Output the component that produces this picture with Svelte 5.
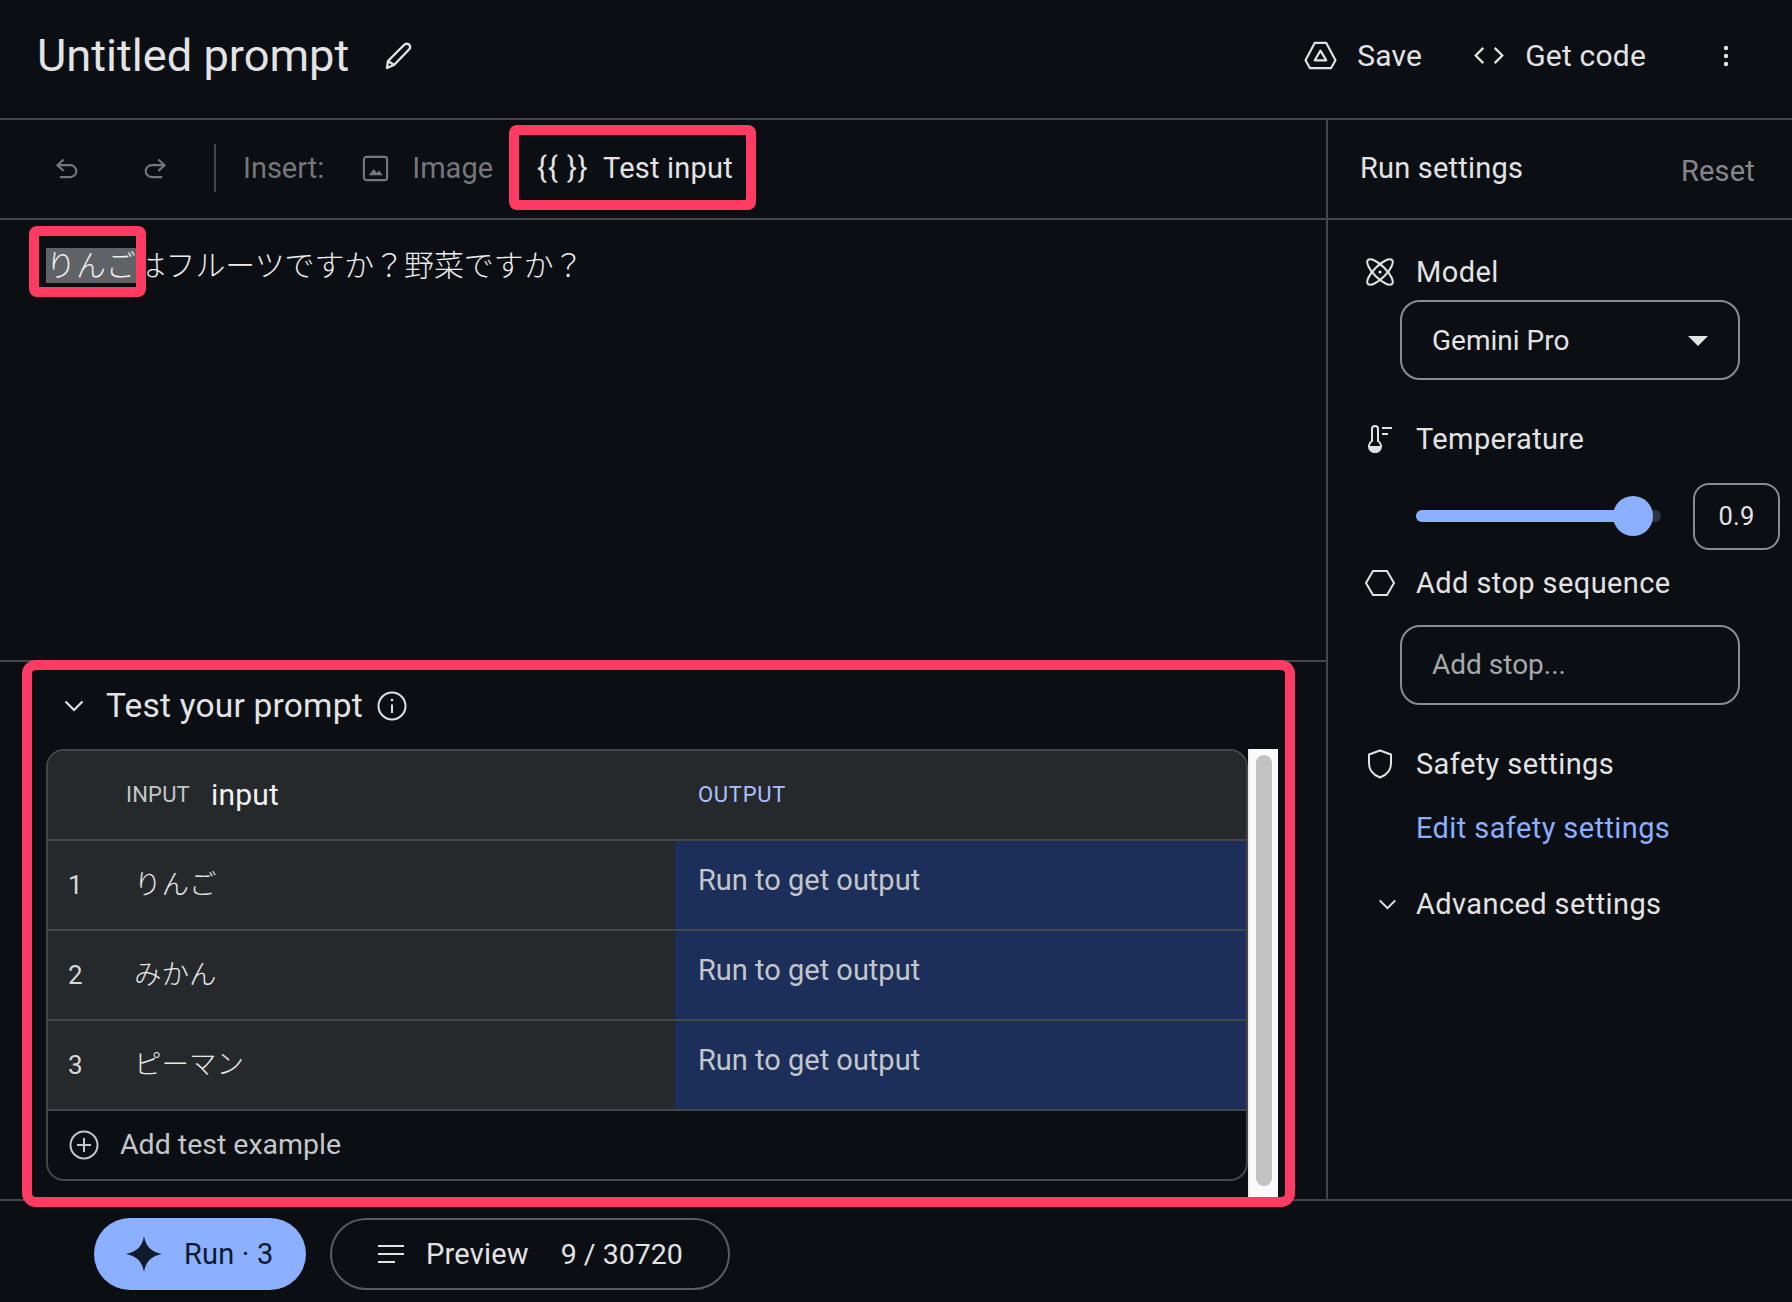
<script>
const rows = [
  { n: 1, text: 'りんご' },
  { n: 2, text: 'みかん' },
  { n: 3, text: 'ピーマン' }
]
</script>

<div class="app">
  <header class="top">
    <h1>Untitled prompt</h1>
    <svg class="pencil" viewBox="0 0 28 28" fill="none" stroke="currentColor" stroke-width="2.4" stroke-linejoin="round"><path d="M2 26l1-7L19 3c1.500-1.500 3.500-1.500 5-.5s1.500 3.500 0 5L9 23z"/><path d="M3 19l6 4"/></svg>
    <div class="top-actions">
      <span class="action save">
        <svg viewBox="0 0 34 30" fill="none" stroke="currentColor" stroke-width="2.2" stroke-linejoin="round"><path d="M11 2h12l9.500 18-4.500 8H6l-4.500-8z"/><path d="M17 10l6 10H11z"/></svg>
        Save
      </span>
      <span class="action code">
        <svg viewBox="0 0 32 20" fill="none" stroke="currentColor" stroke-width="2.4"><path d="M10 2L2 10l8 8"/><path d="M22 2l8 8-8 8"/></svg>
        Get code
      </span>
      <svg class="dots" viewBox="0 0 6 22" fill="currentColor"><circle cx="3" cy="3" r="2.2"/><circle cx="3" cy="11" r="2.2"/><circle cx="3" cy="19" r="2.2"/></svg>
    </div>
  </header>

  <div class="body">
    <main class="left">
      <div class="toolbar">
        <svg class="undo" viewBox="0 0 24 22" fill="none" stroke="currentColor" stroke-width="2.2"><path d="M9 1.500L2.500 7.500 9 13.500"/><path d="M3 7.500h13a6 6 0 0 1 0 12.500H5"/></svg>
        <svg class="redo" viewBox="0 0 24 22" fill="none" stroke="currentColor" stroke-width="2.2"><path d="M15 1.500l6.500 6-6.500 6"/><path d="M21 7.500H8a6 6 0 0 0 0 12.500h11"/></svg>
        <span class="divider"></span>
        <span class="insert">Insert:</span>
        <svg class="image" viewBox="0 0 28 28"><rect x="2" y="2" width="24" height="24" rx="2.500" fill="none" stroke="currentColor" stroke-width="2.2"/><path d="M7 21l5-6.500 3.500 4 2.500-2.500 3.500 5z" fill="currentColor"/></svg>
        <span class="image-label">Image</span>
        <span class="test-input"><span class="braces">{'{{ }}'}</span>Test input</span>
      </div>

      <div class="editor">
        <p><mark>りんご</mark>はフルーツですか？野菜ですか？</p>
      </div>

      <section class="tests">
        <div class="tests-head">
          <svg class="chev" viewBox="0 0 20 12" fill="none" stroke="currentColor" stroke-width="2.2"><path d="M1.500 1.500L10 10l8.500-8.500"/></svg>
          <h2>Test your prompt</h2>
          <svg class="info" viewBox="0 0 30 30" fill="none" stroke="currentColor" stroke-width="2"><circle cx="15" cy="15" r="13.500"/><path d="M15 13.500v8.500"/><circle cx="15" cy="9" r="1.300" fill="currentColor" stroke="none"/></svg>
        </div>
        <div class="table-wrap">
          <div class="table">
            <div class="thead">
              <div class="th-in"><span class="cap">INPUT</span><span class="var">input</span></div>
              <div class="th-out">OUTPUT</div>
            </div>
            {#each rows as row}
              <div class="row">
                <div class="cell-in"><span class="num">{row.n}</span><span class="val">{row.text}</span></div>
                <div class="cell-out">Run to get output</div>
              </div>
            {/each}
            <div class="add">
              <svg viewBox="0 0 30 30" fill="none" stroke="currentColor" stroke-width="2"><circle cx="15" cy="15" r="13.500"/><path d="M15 8v14M8 15h14"/></svg>
              Add test example
            </div>
          </div>
          <div class="scroll"><div class="thumb"></div></div>
        </div>
      </section>
    </main>

    <aside class="right">
      <div class="right-head">
        <span>Run settings</span>
        <span class="reset">Reset</span>
      </div>
      <div class="settings">
        <div class="label model">
          <svg viewBox="0 0 28 28" fill="none" stroke="currentColor" stroke-width="2"><ellipse cx="14" cy="14" rx="17" ry="6" transform="rotate(45 14 14)"/><ellipse cx="14" cy="14" rx="17" ry="6" transform="rotate(-45 14 14)"/><circle cx="14" cy="14" r="1.600" fill="currentColor" stroke="none"/></svg>
          Model
        </div>
        <div class="select">Gemini Pro<span class="caret"></span></div>

        <div class="label temp">
          <svg viewBox="0 0 28 28" fill="none" stroke="currentColor" stroke-width="2"><path d="M6 16V4a3 3 0 0 1 6 0v12a6 6 0 1 1-6 0z"/><path d="M3.500 21a5.500 5.500 0 0 0 11 0z" fill="currentColor" stroke="none"/><path d="M16 3h10M16 9h6"/></svg>
          Temperature
        </div>
        <div class="slider-row">
          <div class="slider"><div class="fill"></div><div class="knob"></div></div>
          <div class="value">0.9</div>
        </div>

        <div class="label stop">
          <svg viewBox="0 0 32 28" fill="none" stroke="currentColor" stroke-width="2"><path d="M9 2h14l7 12-7 12H9L2 14z"/></svg>
          Add stop sequence
        </div>
        <div class="select stop-input">Add stop...</div>

        <div class="label safety">
          <svg viewBox="0 0 26 30" fill="none" stroke="currentColor" stroke-width="2" stroke-linejoin="round"><path d="M13 1.500l11 4v9c0 6.500-4.500 11.500-11 14-6.500-2.500-11-7.500-11-14v-9z"/></svg>
          Safety settings
        </div>
        <div class="edit">Edit safety settings</div>
        <div class="label advanced">
          <svg viewBox="0 0 20 12" fill="none" stroke="currentColor" stroke-width="2.2"><path d="M1.500 1.500L10 10l8.500-8.500"/></svg>
          Advanced settings
        </div>
      </div>
    </aside>
  </div>

  <footer class="bottom">
    <div class="run">
      <svg viewBox="0 0 36 36" fill="currentColor"><path d="M18 0c1.500 10 7 16 18 18-11 2-16.500 8-18 18-1.500-10-7-16-18-18 11-2 16.500-8 18-18z"/></svg>
      Run · 3
    </div>
    <div class="preview">
      <svg viewBox="0 0 28 20" fill="none" stroke="currentColor" stroke-width="2.2"><path d="M1 2h26M1 10h26M1 18h17"/></svg>
      <span class="pv">Preview</span>
      <span class="count">9 / 30720</span>
    </div>
  </footer>

  <div class="mark-box mark-test"></div>
  <div class="mark-box mark-word"></div>
  <div class="mark-box mark-section"></div>
</div>

<style>
  :global(body) {
    margin: 0;
    background: #0b0e13;
  }

  .app {
    position: relative;
    width: 1792px;
    height: 1302px;
    overflow: hidden;
    display: flex;
    flex-direction: column;
    background: #0b0e13;
    color: #e3e3e3;
    font-family: Roboto, "Noto Sans CJK JP", sans-serif;
    font-size: 29px;
    letter-spacing: 0.2px;
  }

  svg {
    display: block;
    flex: none;
  }

  /* top bar */
  .top {
    height: 111px;
    flex: none;
    display: flex;
    align-items: center;
    padding: 0 0 7px 37px;
    border-bottom: 2px solid #444649;
  }
  h1 {
    margin: 0;
    font-size: 45.2px;
    font-weight: 400;
    letter-spacing: 0;
    width: 348px;
  }
  .pencil {
    width: 28px;
    height: 28px;
  }
  .top-actions {
    margin-left: auto;
    display: flex;
    align-items: center;
    padding-right: 63px;
  }
  .action {
    display: flex;
    align-items: center;
    gap: 20px;
    font-size: 30px;
  }
  .save svg {
    width: 33px;
    height: 29px;
  }
  .code {
    margin-left: 51px;
  }
  .code svg {
    width: 32px;
    height: 19px;
  }
  .dots {
    margin-left: 77px;
    width: 6px;
    height: 22px;
  }

  /* main split */
  .body {
    flex: 1;
    min-height: 0;
    display: flex;
    border-bottom: 2px solid #444649;
  }
  .left {
    width: 1326px;
    flex: none;
    display: flex;
    flex-direction: column;
    border-right: 2px solid #444649;
  }

  .toolbar {
    height: 96px;
    flex: none;
    display: flex;
    align-items: center;
    padding: 0 0 2px 55px;
    border-bottom: 2px solid #444649;
    color: #75777a;
  }
  .undo,
  .redo {
    width: 23px;
    height: 21px;
  }
  .redo {
    margin-left: 66px;
  }
  .divider {
    width: 2px;
    height: 48px;
    background: #444649;
    margin: 0 27px 0 47px;
  }
  .insert,
  .image-label {
    letter-spacing: 0;
  }
  .image {
    width: 27px;
    height: 27px;
    margin: 0 23px 0 38px;
  }
  .test-input {
    color: #e3e3e3;
    display: flex;
    margin-left: 44px;
  }
  .braces {
    width: 66px;
    letter-spacing: 1px;
  }

  .editor {
    height: 440px;
    flex: none;
    border-bottom: 2px solid #444649;
  }
  .editor p {
    margin: 0;
    padding: 27px 0 0 46px;
    font-size: 29.9px;
    letter-spacing: 0;
    line-height: 38px;
    font-weight: 300;
    color: #ededed;
  }
  mark {
    background: #5f6266;
    color: inherit;
  }

  /* test table */
  .tests {
    flex: 1;
    min-height: 0;
    padding: 0 0 0 46px;
  }
  .tests-head {
    height: 87px;
    display: flex;
    align-items: center;
    color: #e3e3e3;
  }
  .chev {
    width: 20px;
    height: 12px;
    margin: 0 22px 0 18px;
  }
  h2 {
    margin: 0;
    font-size: 33.5px;
    font-weight: 400;
    width: 271px;
    padding-bottom: 1px;
  }
  .info {
    width: 30px;
    height: 30px;
  }
  .table-wrap {
    display: flex;
    align-items: flex-start;
  }
  .table {
    width: 1202px;
    height: 432px;
    flex: none;
    box-sizing: border-box;
    border: 2px solid #444649;
    border-radius: 18px;
    overflow: hidden;
  }
  .thead {
    height: 88px;
    display: grid;
    grid-template-columns: 627px 1fr;
    align-items: center;
    background: #26292c;
    padding-bottom: 2px;
    box-sizing: border-box;
  }
  .th-in {
    display: flex;
    align-items: center;
    padding-left: 78px;
  }
  .cap {
    font-size: 22px;
    color: #c4c6c9;
    width: 85px;
  }
  .var {
    font-size: 30px;
    color: #f1f1f1;
  }
  .th-out {
    padding-left: 23px;
    font-size: 22px;
    letter-spacing: 0.7px;
    color: #a8c0ff;
  }
  .row {
    height: 90px;
    box-sizing: border-box;
    border-top: 2px solid #444649;
    display: grid;
    grid-template-columns: 627px 1fr;
    background: #26292c;
  }
  .cell-in {
    display: flex;
    align-items: center;
    color: #e6e7e8;
  }
  .num {
    width: 86px;
    padding-left: 20px;
    box-sizing: border-box;
    font-size: 26px;
    color: #d6d8da;
  }
  .val {
    font-size: 27.5px;
    letter-spacing: 0;
    font-weight: 300;
    margin-bottom: 6px;
  }
  .cell-out {
    background: #1b2f5a;
    color: #c4c6c9;
    letter-spacing: 0;
    padding: 22px 0 0 23px;
  }
  .add {
    height: 72px;
    box-sizing: border-box;
    border-top: 2px solid #444649;
    display: flex;
    align-items: center;
    gap: 21px;
    padding: 0 0 3px 21px;
    color: #c4c6c9;
    font-size: 28.5px;
    letter-spacing: 0;
  }
  .add svg {
    width: 30px;
    height: 30px;
  }
  .scroll {
    width: 30px;
    height: 448px;
    flex: none;
    box-sizing: border-box;
    background: #fafafa;
    border-left: 2px solid #ececec;
    padding: 6px 0 11px 6px;
  }
  .thumb {
    width: 16px;
    height: 100%;
    border-radius: 8px;
    background: #c2c2c2;
  }

  /* run settings */
  .right {
    flex: 1;
    min-width: 0;
  }
  .right-head {
    height: 96px;
    display: flex;
    align-items: center;
    justify-content: space-between;
    padding: 0 37px 2px 32px;
    border-bottom: 2px solid #444649;
  }
  .reset {
    color: #85878a;
    padding-top: 6px;
  }
  .settings {
    padding-left: 38px;
    display: flex;
    flex-direction: column;
  }
  .label {
    display: flex;
    align-items: center;
    height: 36px;
    letter-spacing: 0.4px;
  }
  .label svg {
    width: 28px;
    height: 28px;
    margin-right: 22px;
  }
  .model {
    margin-top: 34px;
  }
  .select {
    margin: 10px 0 0 34px;
    width: 340px;
    height: 80px;
    box-sizing: border-box;
    border: 2px solid #8a8c90;
    border-radius: 20px;
    padding: 0 30px;
    display: flex;
    align-items: center;
    justify-content: space-between;
    font-size: 28px;
    letter-spacing: 0;
  }
  .caret {
    width: 0;
    height: 0;
    border-left: 10px solid transparent;
    border-right: 10px solid transparent;
    border-top: 10px solid #e3e3e3;
    margin-top: 2px;
  }
  .temp {
    margin-top: 41px;
  }
  .slider-row {
    display: flex;
    align-items: center;
    padding-left: 50px;
    margin-top: 26px;
  }
  .slider {
    position: relative;
    width: 245px;
    height: 12px;
    border-radius: 6px;
    background: #2c3442;
    margin-bottom: 2px;
  }
  .fill {
    width: 217px;
    height: 100%;
    border-radius: 6px;
    background: #8ab0ff;
  }
  .knob {
    position: absolute;
    left: 197px;
    top: -14px;
    width: 40px;
    height: 40px;
    border-radius: 50%;
    background: #8ab0ff;
  }
  .value {
    margin-left: 32px;
    width: 87px;
    height: 67px;
    box-sizing: border-box;
    border: 2px solid #8a8c90;
    border-radius: 16px;
    display: flex;
    align-items: center;
    justify-content: center;
    font-size: 25.5px;
    padding-bottom: 2px;
  }
  .stop {
    margin-top: 15px;
  }
  .stop svg {
    width: 32px;
    margin-left: -2px;
    margin-right: 20px;
  }
  .stop-input {
    margin-top: 24px;
    color: #a6a8ab;
    padding-bottom: 2px;
  }
  .safety {
    margin-top: 41px;
  }
  .safety svg {
    height: 30px;
  }
  .edit {
    margin: 28px 0 0 50px;
    height: 36px;
    line-height: 36px;
    color: #8ab0ff;
    letter-spacing: 0.4px;
  }
  .advanced {
    margin-top: 40px;
  }
  .advanced svg {
    width: 19px;
    height: 11px;
    margin: 0 19px 0 12px;
  }

  /* bottom bar */
  .bottom {
    height: 101px;
    flex: none;
    display: flex;
    align-items: center;
    gap: 24px;
    padding: 5px 0 0 94px;
    box-sizing: border-box;
  }
  .run {
    width: 212px;
    height: 72px;
    box-sizing: border-box;
    border-radius: 36px;
    background: #8ab0ff;
    color: #111a2b;
    display: flex;
    align-items: center;
    gap: 22px;
    padding-left: 32px;
  }
  .run svg {
    width: 36px;
    height: 36px;
  }
  .preview {
    width: 400px;
    height: 72px;
    box-sizing: border-box;
    border: 2px solid #5a5c5f;
    border-radius: 36px;
    display: flex;
    align-items: center;
    padding-left: 45px;
  }
  .preview svg {
    width: 28px;
    height: 20px;
    margin-right: 21px;
  }
  .count {
    margin-left: 32px;
    font-size: 28.5px;
    letter-spacing: 0;
  }

  /* pink annotation frames */
  .mark-box {
    position: absolute;
    box-sizing: border-box;
    border: 10px solid #ff3b63;
    border-radius: 8px;
    pointer-events: none;
  }
  .mark-test {
    left: 509px;
    top: 125px;
    width: 247px;
    height: 85px;
  }
  .mark-word {
    left: 29px;
    top: 226px;
    width: 117px;
    height: 71px;
  }
  .mark-section {
    left: 22px;
    top: 660px;
    width: 1273px;
    height: 547px;
    border-radius: 14px;
  }
</style>
